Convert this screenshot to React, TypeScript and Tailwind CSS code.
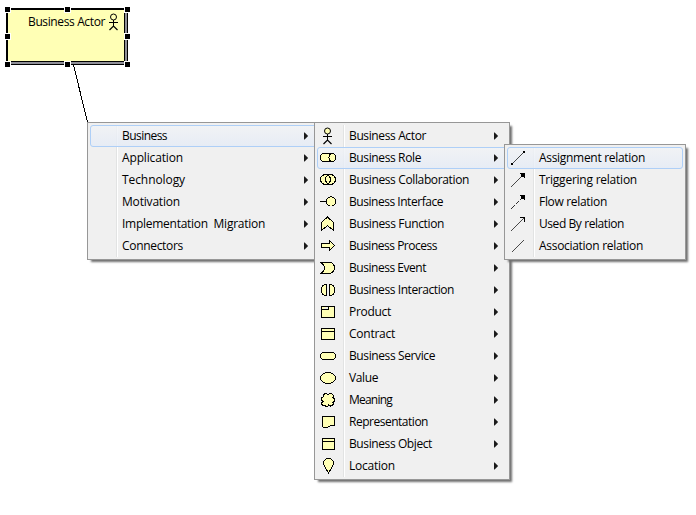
import { useLayoutEffect, useRef, useState, type ReactNode } from "react";

const FILL = "#ffffb5";

/** Text whose tracking is tuned so that it spans exactly `width` pixels. */
function Label({ text, width }: { text: string; width: number }) {
  const ref = useRef<HTMLSpanElement>(null);
  const [tracking, setTracking] = useState(0);
  useLayoutEffect(() => {
    if (ref.current) {
      const natural = ref.current.getBoundingClientRect().width;
      setTracking((width - natural) / text.length);
    }
  }, [text, width]);
  return (
    <span ref={ref} className="inline-block whitespace-pre" style={{ letterSpacing: tracking }}>
      {text}
    </span>
  );
}

function Icon({ children }: { children?: ReactNode }) {
  return (
    <svg width="16" height="16" viewBox="0 0 16 16" fill={FILL} stroke="#000" strokeWidth="1" shapeRendering="crispEdges" className="shrink-0 overflow-visible">
      {children}
    </svg>
  );
}

const actor = (
  <>
    <circle cx="7.5" cy="3" r="3" shapeRendering="auto" />
    <path d="M7.5 6v6M3 8.5h9" fill="none" />
    <path d="M3.5 16L7.5 12L11.5 16" fill="none" shapeRendering="auto" strokeWidth="1.2" />
  </>
);

const icons: Record<string, ReactNode> = {
  actor,
  role: (
    <>
      <path d="M4 3.5H12.5A3.3 3.8 0 0 1 12.5 11.5H4A3.5 4 0 0 1 4 3.5Z" />
      <ellipse cx="12.2" cy="7.5" rx="3.3" ry="3.8" />
    </>
  ),
  collaboration: (
    <>
      <circle cx="5.5" cy="7.5" r="5" />
      <circle cx="10.5" cy="7.5" r="5" />
      <circle cx="5.5" cy="7.5" r="5" fill="none" />
    </>
  ),
  interface: (
    <>
      <path d="M0 7.5h6" />
      <circle cx="11" cy="7.5" r="4.6" />
    </>
  ),
  function: <path d="M7.5 1L13.5 6.5V14.5L7.5 9.5L1.5 14.5V6.5Z" />,
  process: <path d="M1.5 5.5H9.5V2.5L14.5 7.5L9.5 12.5V9.5H1.5Z" />,
  event: <path d="M.5 2.5H9.5C12.5 2.5 14.5 5 14.5 7.5S12.5 13.5 9.5 13.5H.5C3 12 4.5 10 4.5 8S3 4 .5 2.5Z" />,
  interaction: <path d="M6.5 2.5V13.5C3 13.5 1.5 11 1.5 8S3 2.5 6.5 2.5ZM9.5 2.5C13 2.5 14.5 5 14.5 8S13 13.5 9.5 13.5Z" />,
  product: <path d="M1.5 2.5H14.5V13.5H1.5ZM1.5 5.5H8.5V2.5" />,
  contract: <path d="M1.5 2.5H14.5V13.5H1.5ZM1.5 5.5H14.5" />,
  service: <rect x=".5" y="4.5" width="15" height="7" rx="3.5" />,
  value: <ellipse cx="8" cy="8" rx="7.5" ry="5.5" />,
  meaning: <path d="M8 2.8C6 .8 3 1.5 3.3 4.8C.8 5.2.8 8.8 3 9.3C.5 10.8 2 14.3 5 13.5C6.3 15 8 14.5 8.5 13C10.5 15 14 14 13 10.5C15.2 9.5 15 6.3 12.8 6C15 2.8 10.5-.2 8 2.8Z" />,
  representation: <path d="M2.5 2.5H14.5V11.5C11 10 9 14 5.5 13.5C4 13.5 3 13 2.5 12.5Z" />,
  object: <path d="M2.5 2.5H14.5V13.5H2.5ZM2.5 5.5H14.5" />,
  location: <path d="M8.5 15L3.5 6.5C2.5 3 5.5.5 8.5.5S14.5 3 13.5 6.5Z" />,
  assignment: (
    <>
      <path d="M2 13.6L14 1.6" strokeWidth=".7" />
      <path d="M1 13h2v2H1ZM13 1h2v2h-2Z" fill="#000" stroke="none" />
    </>
  ),
  triggering: (
    <>
      <path d="M1 14.6L13 2.6" strokeWidth=".7" />
      <path d="M9 1H15V7L13 5H11V3Z" fill="#000" stroke="none" />
    </>
  ),
  flow: (
    <>
      <path d="M1 14.6L13 2.6" strokeWidth=".8" strokeDasharray="4.6 1.4" />
      <path d="M9 1H15V7L13 5H11V3Z" fill="#000" stroke="none" />
    </>
  ),
  usedBy: (
    <>
      <path d="M1 14.6L14 1.6" strokeWidth=".7" />
      <path d="M10 1.5H14.5V6" fill="none" />
    </>
  ),
  association: <path d="M2 14.1L14.5 1.6" strokeWidth=".7" />,
};

type Item = { label: string; width: number; icon?: string };

const categories: Item[] = [
  { label: "Business", width: 45 },
  { label: "Application", width: 61 },
  { label: "Technology", width: 63 },
  { label: "Motivation", width: 58 },
  { label: "Implementation  Migration", width: 143 },
  { label: "Connectors", width: 61 },
];

const elements: Item[] = [
  { label: "Business Actor", width: 77, icon: "actor" },
  { label: "Business Role", width: 72, icon: "role" },
  { label: "Business Collaboration", width: 120, icon: "collaboration" },
  { label: "Business Interface", width: 94, icon: "interface" },
  { label: "Business Function", width: 95, icon: "function" },
  { label: "Business Process", width: 88, icon: "process" },
  { label: "Business Event", width: 77, icon: "event" },
  { label: "Business Interaction", width: 105, icon: "interaction" },
  { label: "Product", width: 42, icon: "product" },
  { label: "Contract", width: 46, icon: "contract" },
  { label: "Business Service", width: 86, icon: "service" },
  { label: "Value", width: 29, icon: "value" },
  { label: "Meaning", width: 43, icon: "meaning" },
  { label: "Representation", width: 79, icon: "representation" },
  { label: "Business Object", width: 83, icon: "object" },
  { label: "Location", width: 46, icon: "location" },
];

const relations: Item[] = [
  { label: "Assignment relation", width: 106, icon: "assignment" },
  { label: "Triggering relation", width: 98, icon: "triggering" },
  { label: "Flow relation", width: 68, icon: "flow" },
  { label: "Used By relation", width: 85, icon: "usedBy" },
  { label: "Association relation", width: 104, icon: "association" },
];

function Menu({ items, active, arrows, place }: { items: Item[]; active: number; arrows?: boolean; place: string }) {
  return (
    <div className={`absolute border border-[#979797] bg-[#f0f0f0] p-[2px] shadow-[3px_3px_2px_-1px_#707070] ${place}`}>
      <div className="relative">
        <div className="absolute inset-y-0 left-[26px] w-[2px] border-l border-[#e2e3e3] bg-white" />
        {items.map((item, i) => (
          <div
            key={item.label}
            className={`relative flex h-[22px] items-center rounded-[3px] border pl-[2px] ${
              i === active ? "border-[#aecff7] bg-linear-to-b from-[#f1f3f6]/80 to-[#e4ebf6]/80" : "border-transparent"
            }`}
          >
            <Icon>{item.icon ? icons[item.icon] : null}</Icon>
            <div className="ml-[13px] h-[20px] leading-[20px]">
              <Label text={item.label} width={item.width} />
            </div>
            {arrows && (
              <svg width="5" height="8" viewBox="0 0 5 8" className="mr-[7px] ml-auto" fill="#1b1b1b">
                <path d="M0 .5H.6L4.1 4L.6 7.5H0Z" />
              </svg>
            )}
          </div>
        ))}
      </div>
    </div>
  );
}

const handles = [
  "left-[4px] top-[6px]",
  "left-[64px] top-[6px]",
  "left-[124px] top-[6px]",
  "left-[4px] top-[33px]",
  "left-[124px] top-[33px]",
  "left-[4px] top-[61px]",
  "left-[64px] top-[61px]",
  "left-[124px] top-[61px]",
];

export default function App() {
  return (
    <main className="relative h-[515px] w-[696px] overflow-hidden bg-white font-['Open_Sans','Noto_Sans',sans-serif] text-[12px] text-black">
      <svg className="absolute top-0 left-0" width="120" height="130" shapeRendering="crispEdges">
        <path d="M73.5 65L87.5 122" stroke="#000" />
      </svg>
      <div className="absolute top-[8px] left-[6px] h-[57px] w-[122px] border-t-2 border-r border-b border-l-2 border-black bg-[#8f8f98]">
        <div className="flex h-[52px] w-[117px] items-start justify-end border-r border-b border-black bg-[#ffffb5] pr-[2px]">
          <div className="mt-[2px] h-[20px] leading-[20px]">
            <Label text="Business Actor" width={77} />
          </div>
          <div className="mt-[4px] ml-[1px] h-4 w-4">
            <Icon>{actor}</Icon>
          </div>
        </div>
      </div>
      {handles.map((place) => (
        <div key={place} className={`absolute h-[7px] w-[7px] border border-white bg-black ${place}`} />
      ))}
      <Menu items={categories} active={0} arrows place="left-[87px] top-[122px] w-[233px]" />
      <Menu items={elements} active={1} arrows place="left-[314px] top-[122px] w-[196px]" />
      <Menu items={relations} active={0} place="left-[504px] top-[144px] w-[182px]" />
    </main>
  );
}
